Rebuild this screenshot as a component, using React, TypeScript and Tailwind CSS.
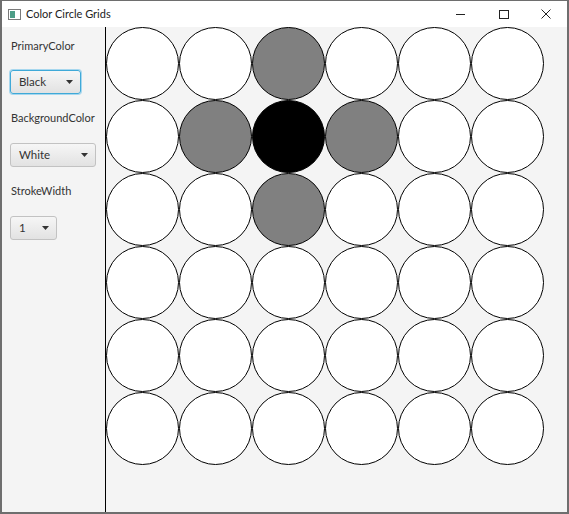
import React from "react";

const font = { fontFamily: 'Lato, "Noto Sans", sans-serif' };

// which cells are filled, by row/col
const fills: Record<string, string> = {
  "0-2": "bg-[#808080]",
  "1-1": "bg-[#808080]",
  "1-2": "bg-black",
  "1-3": "bg-[#808080]",
  "2-2": "bg-[#808080]",
};

function Arrow() {
  return (
    <svg width="7" height="4" viewBox="0 0 7 4" className="shrink-0">
      <path d="M0 0 L7 0 L3.5 4 Z" fill="#333" />
    </svg>
  );
}

function Combo({ label, width, focused }: { label: string; width: string; focused?: boolean }) {
  return (
    <div
      className={`${width} h-[24px] flex items-center justify-between pl-[8px] pr-[7px] rounded-[3px] border text-[11.5px] text-[#333] bg-gradient-to-b from-[#f6f6f6] to-[#e2e2e2] ${
        focused
          ? "border-[#3fa9d8] shadow-[0_0_0_1px_#a7d7ee]"
          : "border-[#c2c2c2]"
      }`}
    >
      <span>{label}</span>
      <Arrow />
    </div>
  );
}

function TitleBar() {
  return (
    <div className="h-[26px] bg-white flex items-center relative shrink-0">
      <div className="ml-[6px] w-[13px] h-[11px] border border-[#7a7a7a] bg-white flex items-center justify-center">
        <div className="w-[5px] h-[7px] bg-[#4d9d87] mr-[4px]" />
      </div>
      <span className="ml-[5px] text-[11px] text-[#222]">Color Circle Grids</span>
      <div className="flex-1" />
      <div className="w-[9px] h-[1px] bg-[#222] mr-[34px]" />
      <div className="w-[10px] h-[9px] border border-[#222] mr-[32px]" />
      <svg width="10" height="10" viewBox="0 0 10 10" className="mr-[16px]">
        <path d="M0.5 0.5 L9.5 9.5 M9.5 0.5 L0.5 9.5" stroke="#222" strokeWidth="1" />
      </svg>
    </div>
  );
}

export default function App() {
  const rows = [0, 1, 2, 3, 4, 5];
  return (
    <div style={font} className="w-[569px] h-[514px] flex flex-col bg-[#f4f4f4] border-x-2 border-b-2 border-t border-[#6e6e6e] overflow-hidden">
      <TitleBar />
      <div className="flex flex-1 min-h-0">
        <div className="w-[104px] border-r border-black bg-[#f4f4f4] pl-[8px] pt-[11px] flex flex-col text-[11px] text-[#333]">
          <div className="pl-[1px] h-[16px] leading-[16px]">PrimaryColor</div>
          <div className="mt-[16px]">
            <Combo label="Black" width="w-[71px]" focused />
          </div>
          <div className="pl-[1px] mt-[16px] h-[16px] leading-[16px]">BackgroundColor</div>
          <div className="mt-[17px]">
            <Combo label="White" width="w-[86px]" />
          </div>
          <div className="pl-[1px] mt-[16px] h-[16px] leading-[16px]">StrokeWidth</div>
          <div className="mt-[17px]">
            <Combo label="1" width="w-[47px]" />
          </div>
        </div>
        <div className="grid grid-cols-[repeat(6,73px)] grid-rows-[repeat(6,73px)] content-start">
          {rows.map((r) =>
            rows.map((c) => (
              <div
                key={`${r}-${c}`}
                className={`w-[73px] h-[73px] rounded-full border border-black ${fills[`${r}-${c}`] ?? "bg-white"}`}
              />
            ))
          )}
        </div>
      </div>
    </div>
  );
}
